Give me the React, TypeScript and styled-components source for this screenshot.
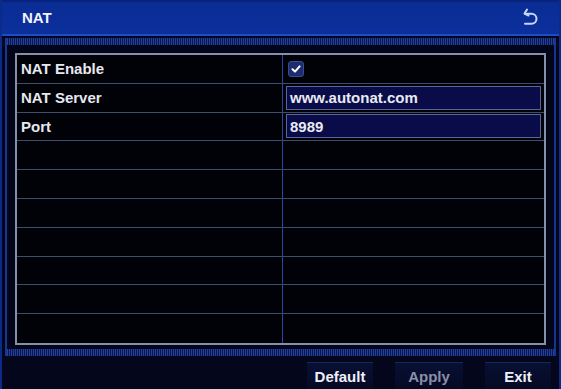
import React from "react";
import styled, { createGlobalStyle } from "styled-components";

const GlobalStyle = createGlobalStyle`
  html, body {
    margin: 0;
    padding: 0;
    background: #050920;
  }
  body {
    font-family: "Liberation Sans", Arial, sans-serif;
  }
`;

const Screen = styled.div`
  width: 561px;
  height: 389px;
  box-sizing: border-box;
  display: flex;
  flex-direction: column;
  background: #04071c;
  border-left: 2px solid #0b2a8a;
  border-right: 2px solid #0b2a8a;
  overflow: hidden;
`;

const TitleBar = styled.div`
  height: 34px;
  flex-shrink: 0;
  display: flex;
  align-items: center;
  justify-content: space-between;
  padding: 0 20px 0 20px;
  background: linear-gradient(#061f74 0, #0a2c94 3px, #0b2f9c 100%);
  border-bottom: 2px solid #1f4cc4;
  color: #f2f4ff;
  font-weight: bold;
  font-size: 15px;
`;

const BackButton = styled.div`
  width: 18px;
  height: 20px;
  display: flex;
  align-items: center;
  justify-content: center;
`;

const Panel = styled.div`
  margin: 2px 3px 0 3px;
  height: 318px;
  box-sizing: border-box;
  display: flex;
  flex-direction: column;
  border-left: 2px solid #173690;
  border-right: 2px solid #173690;
  background: #03061a;
`;

const Hatch = styled.div`
  height: 7px;
  flex-shrink: 0;
  background: repeating-linear-gradient(
    90deg,
    #243f98 0 1px,
    #0b1750 1px 2px
  );
`;

const TableArea = styled.div`
  flex: 1;
  padding: 8px 8px 4px 8px;
  display: flex;
`;

const Table = styled.div`
  flex: 1;
  display: grid;
  grid-template-columns: 265px 1fr;
  grid-template-rows: repeat(10, 1fr);
  border: 2px solid #8690a6;
  background: #010208;
`;

const Cell = styled.div<{ $value?: boolean; $last?: boolean }>`
  display: flex;
  align-items: center;
  box-sizing: border-box;
  padding: 0 ${(p) => (p.$value ? "3px" : "4px")};
  border-bottom: ${(p) => (p.$last ? "none" : "1px solid #3e4c6e")};
  border-left: ${(p) => (p.$value ? "1px solid #2a489e" : "none")};
  color: #e6e8f0;
  font-size: 15px;
  font-weight: bold;
`;

const CheckBox = styled.div`
  width: 14px;
  height: 14px;
  margin-left: 2px;
  border-radius: 3px;
  background: #1d2c6e;
  border: 1px solid #3a4c90;
  display: flex;
  align-items: center;
  justify-content: center;
`;

const Field = styled.div`
  flex: 1;
  height: 24px;
  box-sizing: border-box;
  display: flex;
  align-items: center;
  padding: 0 3px;
  background: #090c48;
  border: 1px solid #56689a;
  color: #e8eaf2;
  font-size: 15px;
  font-weight: bold;
`;

const Footer = styled.div`
  flex: 1;
  display: flex;
  justify-content: flex-end;
  align-items: flex-end;
  gap: 22px;
  padding: 0 8px 0 0;
`;

const ActionButton = styled.div<{ $disabled?: boolean; $w: number }>`
  width: ${(p) => p.$w}px;
  height: 26px;
  display: flex;
  align-items: center;
  justify-content: center;
  background: linear-gradient(#081033, #050924);
  border-top: 1px solid #17275c;
  color: ${(p) => (p.$disabled ? "#8a90a8" : "#eef0f8")};
  font-size: 15px;
  font-weight: bold;
`;

const rows: { label: string; kind: "check" | "text"; value?: string }[] = [
  { label: "NAT Enable", kind: "check" },
  { label: "NAT Server", kind: "text", value: "www.autonat.com" },
  { label: "Port", kind: "text", value: "8989" },
];

export default function App() {
  const all = Array.from({ length: 10 }, (_, i) => rows[i]);
  return (
    <>
      <GlobalStyle />
      <Screen>
        <TitleBar>
          <span>NAT</span>
          <BackButton>
            <svg width="18" height="20" viewBox="0 0 18 20" fill="none">
              <path
                d="M6 2.5 L3.5 6.5 L7.5 8.5"
                stroke="#c6d6fa"
                strokeWidth="2"
                strokeLinecap="round"
                strokeLinejoin="round"
              />
              <path
                d="M4 6.8 H10.5 a5 5 0 0 1 0 10 H4"
                stroke="#c6d6fa"
                strokeWidth="2"
                strokeLinecap="round"
              />
            </svg>
          </BackButton>
        </TitleBar>
        <Panel>
          <Hatch />
          <TableArea>
            <Table>
              {all.map((row, i) => (
                <React.Fragment key={i}>
                  <Cell $last={i === 9}>{row?.label}</Cell>
                  <Cell $value $last={i === 9}>
                    {row?.kind === "check" && (
                      <CheckBox>
                        <svg width="10" height="10" viewBox="0 0 10 10">
                          <path
                            d="M1.5 5.2 L4 7.6 L8.6 2.4"
                            stroke="#ffffff"
                            strokeWidth="2"
                            fill="none"
                            strokeLinecap="round"
                            strokeLinejoin="round"
                          />
                        </svg>
                      </CheckBox>
                    )}
                    {row?.kind === "text" && <Field>{row.value}</Field>}
                  </Cell>
                </React.Fragment>
              ))}
            </Table>
          </TableArea>
          <Hatch />
        </Panel>
        <Footer>
          <ActionButton $w={66}>Default</ActionButton>
          <ActionButton $w={68} $disabled>
            Apply
          </ActionButton>
          <ActionButton $w={66}>Exit</ActionButton>
        </Footer>
      </Screen>
    </>
  );
}
